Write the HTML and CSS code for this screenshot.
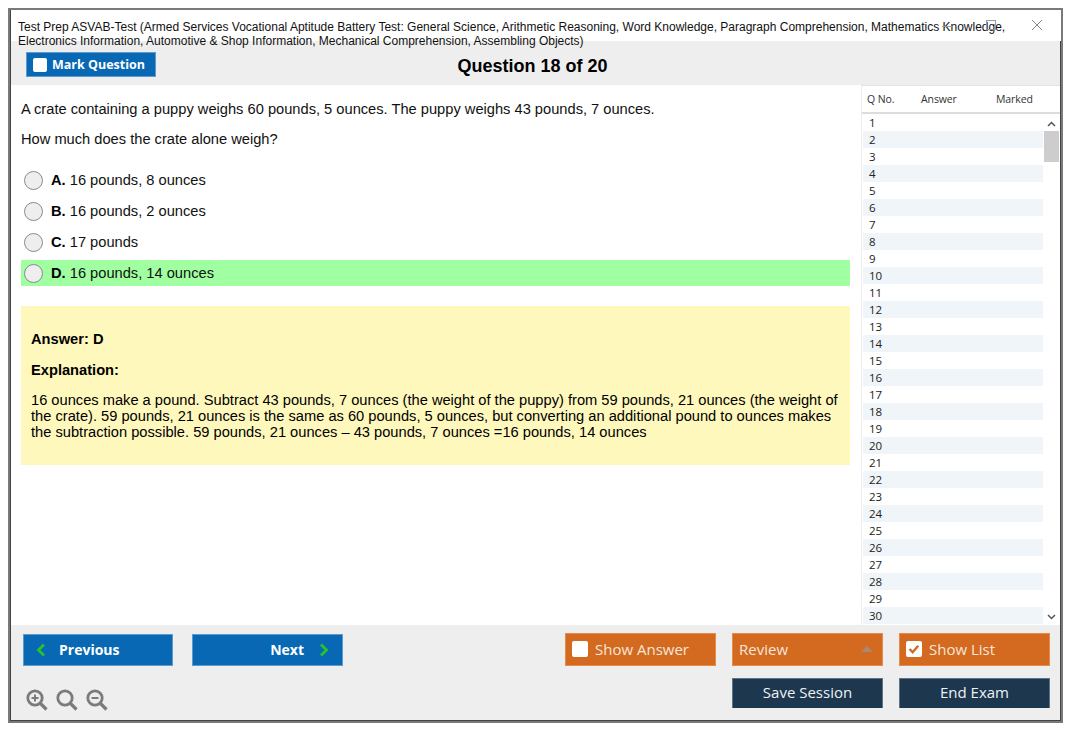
FILE: index.html
```html
<!DOCTYPE html>
<html lang="en">
<head>
<meta charset="utf-8">
<title>Test Prep ASVAB-Test</title>
<link rel="stylesheet" href="styles.css">
</head>
<body>
<div class="window">
  <header class="titlebar">
    <div class="title">Test Prep ASVAB-Test (Armed Services Vocational Aptitude Battery Test: General Science, Arithmetic Reasoning, Word Knowledge, Paragraph Comprehension, Mathematics Knowledge, Electronics Information, Automotive &amp; Shop Information, Mechanical Comprehension, Assembling Objects)</div>
    <span class="win-min"></span>
    <span class="win-max"></span>
    <svg class="win-close" width="12" height="12" viewBox="0 0 12 12"><path d="M1 1l10 10M11 1L1 11" stroke="#8a8a8a" stroke-width="1" fill="none"/></svg>
  </header>
  <div class="qbar">
    <button class="btn btn-blue btn-mark"><span class="check"></span>Mark Question</button>
    <h1 class="qno">Question 18 of 20</h1>
  </div>
  <div class="main">
    <section class="question">
      <p class="stem">A crate containing a puppy weighs 60 pounds, 5 ounces. The puppy weighs 43 pounds, 7 ounces.</p>
      <p class="stem stem2">How much does the crate alone weigh?</p>
      <div class="options">
        <div class="option"><span class="radio"></span><span><b>A.</b> 16 pounds, 8 ounces</span></div>
        <div class="option"><span class="radio"></span><span><b>B.</b> 16 pounds, 2 ounces</span></div>
        <div class="option"><span class="radio"></span><span><b>C.</b> 17 pounds</span></div>
        <div class="option correct"><span class="radio"></span><span><b>D.</b> 16 pounds, 14 ounces</span></div>
      </div>
      <div class="answer">
        <p class="answer-head">Answer: D</p>
        <p class="answer-head expl">Explanation:</p>
        <p class="answer-text">16 ounces make a pound. Subtract 43 pounds, 7 ounces (the weight of the puppy) from 59 pounds, 21 ounces (the weight of the crate). 59 pounds, 21 ounces is the same as 60 pounds, 5 ounces, but converting an additional pound to ounces makes the subtraction possible. 59 pounds, 21 ounces – 43 pounds, 7 ounces =16 pounds, 14 ounces</p>
      </div>
    </section>
    <aside class="list">
      <div class="list-head"><span class="c-no">Q No.</span><span class="c-ans">Answer</span><span class="c-mark">Marked</span></div>
      <div class="list-body">
        <div class="rows" id="rows"></div>
        <div class="scrollbar">
          <svg class="arrow" width="9" height="6" viewBox="0 0 9 6"><path d="M1 5l3.500-3.500L8 5" stroke="#555" stroke-width="1.500" fill="none"/></svg>
          <div class="thumb"></div>
          <svg class="arrow arrow-down" width="9" height="6" viewBox="0 0 9 6"><path d="M1 1l3.500 3.500L8 1" stroke="#555" stroke-width="1.500" fill="none"/></svg>
        </div>
      </div>
    </aside>
  </div>
  <footer class="footer">
    <div class="foot-left">
      <div class="nav">
        <button class="btn btn-blue btn-prev"><svg width="10" height="14" viewBox="0 0 10 14"><path d="M8 1.500L2.500 7 8 12.500" stroke="#27c22c" stroke-width="2.800" fill="none"/></svg>Previous</button>
        <button class="btn btn-blue btn-next">Next<svg width="10" height="14" viewBox="0 0 10 14"><path d="M2 1.500L7.500 7 2 12.500" stroke="#27c22c" stroke-width="2.800" fill="none"/></svg></button>
      </div>
      <div class="zoom">
        <svg width="22" height="22" viewBox="0 0 22 22"><circle cx="9" cy="9" r="7.200" fill="none" stroke="#7b7b7b" stroke-width="2.800"/><path d="M14.500 14.500l6 6" stroke="#7b7b7b" stroke-width="3.200"/><path d="M5.500 9h7M9 5.500v7" stroke="#7b7b7b" stroke-width="2"/></svg>
        <svg width="22" height="22" viewBox="0 0 22 22"><circle cx="9" cy="9" r="7.200" fill="none" stroke="#7b7b7b" stroke-width="2.800"/><path d="M14.500 14.500l6 6" stroke="#7b7b7b" stroke-width="3.200"/></svg>
        <svg width="22" height="22" viewBox="0 0 22 22"><circle cx="9" cy="9" r="7.200" fill="none" stroke="#7b7b7b" stroke-width="2.800"/><path d="M14.500 14.500l6 6" stroke="#7b7b7b" stroke-width="3.200"/><path d="M5.500 9h7" stroke="#7b7b7b" stroke-width="2"/></svg>
      </div>
    </div>
    <div class="foot-right">
      <button class="btn btn-orange"><span class="check"></span>Show Answer</button>
      <button class="btn btn-orange btn-review">Review<span class="caret"></span></button>
      <button class="btn btn-orange"><span class="check"><svg width="16" height="16" viewBox="0 0 16 16"><path d="M3.500 8l3.200 3.200 5.500-6.400" stroke="#d36a20" stroke-width="2.400" fill="none"/></svg></span>Show List</button>
      <button class="btn btn-navy btn-save">Save Session</button>
      <button class="btn btn-navy">End Exam</button>
    </div>
  </footer>
</div>
<script src="rows.js"></script>
</body>
</html>
```
FILE: rows.js
```js
var rows = document.getElementById('rows');
for (var i = 1; i <= 30; i++) {
  var r = document.createElement('div');
  r.className = 'row';
  r.textContent = i;
  rows.appendChild(r);
}
```
FILE: styles.css
```css
* { box-sizing: border-box; }
html, body { margin: 0; padding: 0; background: #fff; }
body { padding: 8px 12px 0 8px; font-family: "Liberation Sans", Arial, sans-serif; color: #000; }
p, h1 { margin: 0; }
.window { width: 1055px; height: 715px; border: 2px solid #7a7a7a; outline: 1px solid #444; outline-offset: -3px; display: flex; flex-direction: column; overflow: hidden; }
.titlebar { height: 31px; flex: none; position: relative; z-index: 1; padding: 10px 50px 0 7px; margin-left: 1px; background: #fff; }
.title { font-size: 12px; line-height: 14px; width: 1000px; color: #111; }
.win-min { position: absolute; left: 931px; top: 16px; width: 11px; height: 1px; background: #999; }
.win-max { position: absolute; left: 975px; top: 10px; width: 10px; height: 10px; border: 1px solid #999; }
.win-close { position: absolute; right: 18px; top: 9px; }
.qbar { height: 44px; flex: none; background: #eee; position: relative; display: flex; justify-content: center; align-items: flex-start; margin: 0 1px; padding-right: 6px; }
.btn { border: 1px solid #6f9fd0; font-family: "Open Sans", sans-serif; font-size: 14px; color: #fff; display: flex; align-items: center; padding: 0; }
.btn-blue { background: #0868b4; font-weight: 700; border-color: #5b9bd0; }
.btn-orange { background: #d36a20; border-color: #e58a4a; color: #f6e6da; font-size: 15px; padding: 0 0 2px 6px; width: 151px; height: 33px; }
.btn-navy { background: #1c374e; border-color: #5f7383; color: #eef2f5; font-size: 15px; justify-content: center; width: 151px; height: 30px; border-bottom: 0; padding-bottom: 3px; }
.check { width: 16px; height: 16px; background: #fff; border-radius: 2px; margin-right: 7px; display: block; flex: none; }
.check svg { display: block; }
.btn-mark { position: absolute; left: 15px; top: 11px; width: 130px; height: 25px; font-size: 12.500px; padding-left: 6px; }
.btn-mark .check { width: 14px; height: 14px; margin-right: 5px; }
.qno { font-size: 18px; font-weight: 700; line-height: 21px; margin-top: 15px; }
.main { flex: 1; display: flex; min-height: 0; margin: 0 1px; background: #fff; }
.question { flex: 1; padding: 15px 11px 0 10px; min-width: 0; }
.stem { font-size: 14.670px; line-height: 18px; color: #111; }
.stem2 { margin-top: 12px; }
.options { margin-top: 19px; display: flex; flex-direction: column; gap: 5px; }
.option { height: 26px; display: flex; align-items: center; font-size: 14.670px; color: #111; gap: 8px; padding-left: 3px; }
.option b { color: #000; }
.option.correct { background: #a0ffa0; }
.radio { width: 19px; height: 19px; border-radius: 50%; background: #eee; border: 1px solid #8a8a8a; flex: none; }
.answer { margin-top: 20px; height: 159px; background: #fff8bd; padding: 24px 10px 0; }
.answer-head { font-size: 14.670px; font-weight: 700; line-height: 18px; }
.expl { margin-top: 13px; }
.answer-text { font-size: 14.670px; line-height: 16px; margin-top: 13px; }
.list { width: 199px; flex: none; border-top: 1px solid #e3e3e3; display: flex; flex-direction: column; background: #fff; border-left: 1px solid #eee; }
.list-head { height: 28px; flex: none; display: flex; align-items: center; font-family: "Open Sans", sans-serif; font-size: 10.500px; letter-spacing: -0.1px; color: #333; border-bottom: 2px solid #ddd; }
.c-no { margin-left: 5px; width: 54px; }
.c-ans { width: 75px; }
.list-body { flex: 1; display: flex; min-height: 0; overflow: hidden; }
.rows { flex: 1; padding-left: 1px; }
.row { height: 17px; font-family: "Open Sans", sans-serif; font-size: 11.500px; line-height: 18px; padding-left: 6px; color: #222; }
.row:nth-child(even) { background: #f0f5f9; }
.scrollbar { width: 17px; flex: none; display: flex; flex-direction: column; align-items: center; padding-top: 7px; }
.thumb { width: 15px; height: 31px; background: #cdcdcd; margin-top: 4px; }
.arrow-down { margin-top: auto; margin-bottom: 5px; }
.footer { height: 95px; flex: none; background: #eee; display: flex; justify-content: space-between; margin: 0 1px 1px; padding: 8px 10px 0 12px; }
.nav { display: flex; gap: 19px; margin-top: 1px; }
.nav .btn { width: 150px; height: 32px; font-size: 14px; padding-bottom: 1px; }
.nav .btn-next { width: 151px; }
.btn-prev { padding-left: 12px; }
.btn-prev svg { margin-right: 13px; }
.btn-next { justify-content: flex-end; padding-right: 13px; }
.btn-next svg { margin-left: 15px; }
.zoom { display: flex; gap: 8px; margin-top: 23px; margin-left: 3px; }
.foot-right { display: grid; grid-template-columns: repeat(3, 151px); column-gap: 16px; row-gap: 12px; grid-auto-rows: min-content; }
.btn-save { grid-column: 2; }
.btn-review { justify-content: space-between; padding-right: 9px; }
.caret { width: 0; height: 0; border-left: 6px solid transparent; border-right: 6px solid transparent; border-bottom: 6px solid #a8886f; }
```
